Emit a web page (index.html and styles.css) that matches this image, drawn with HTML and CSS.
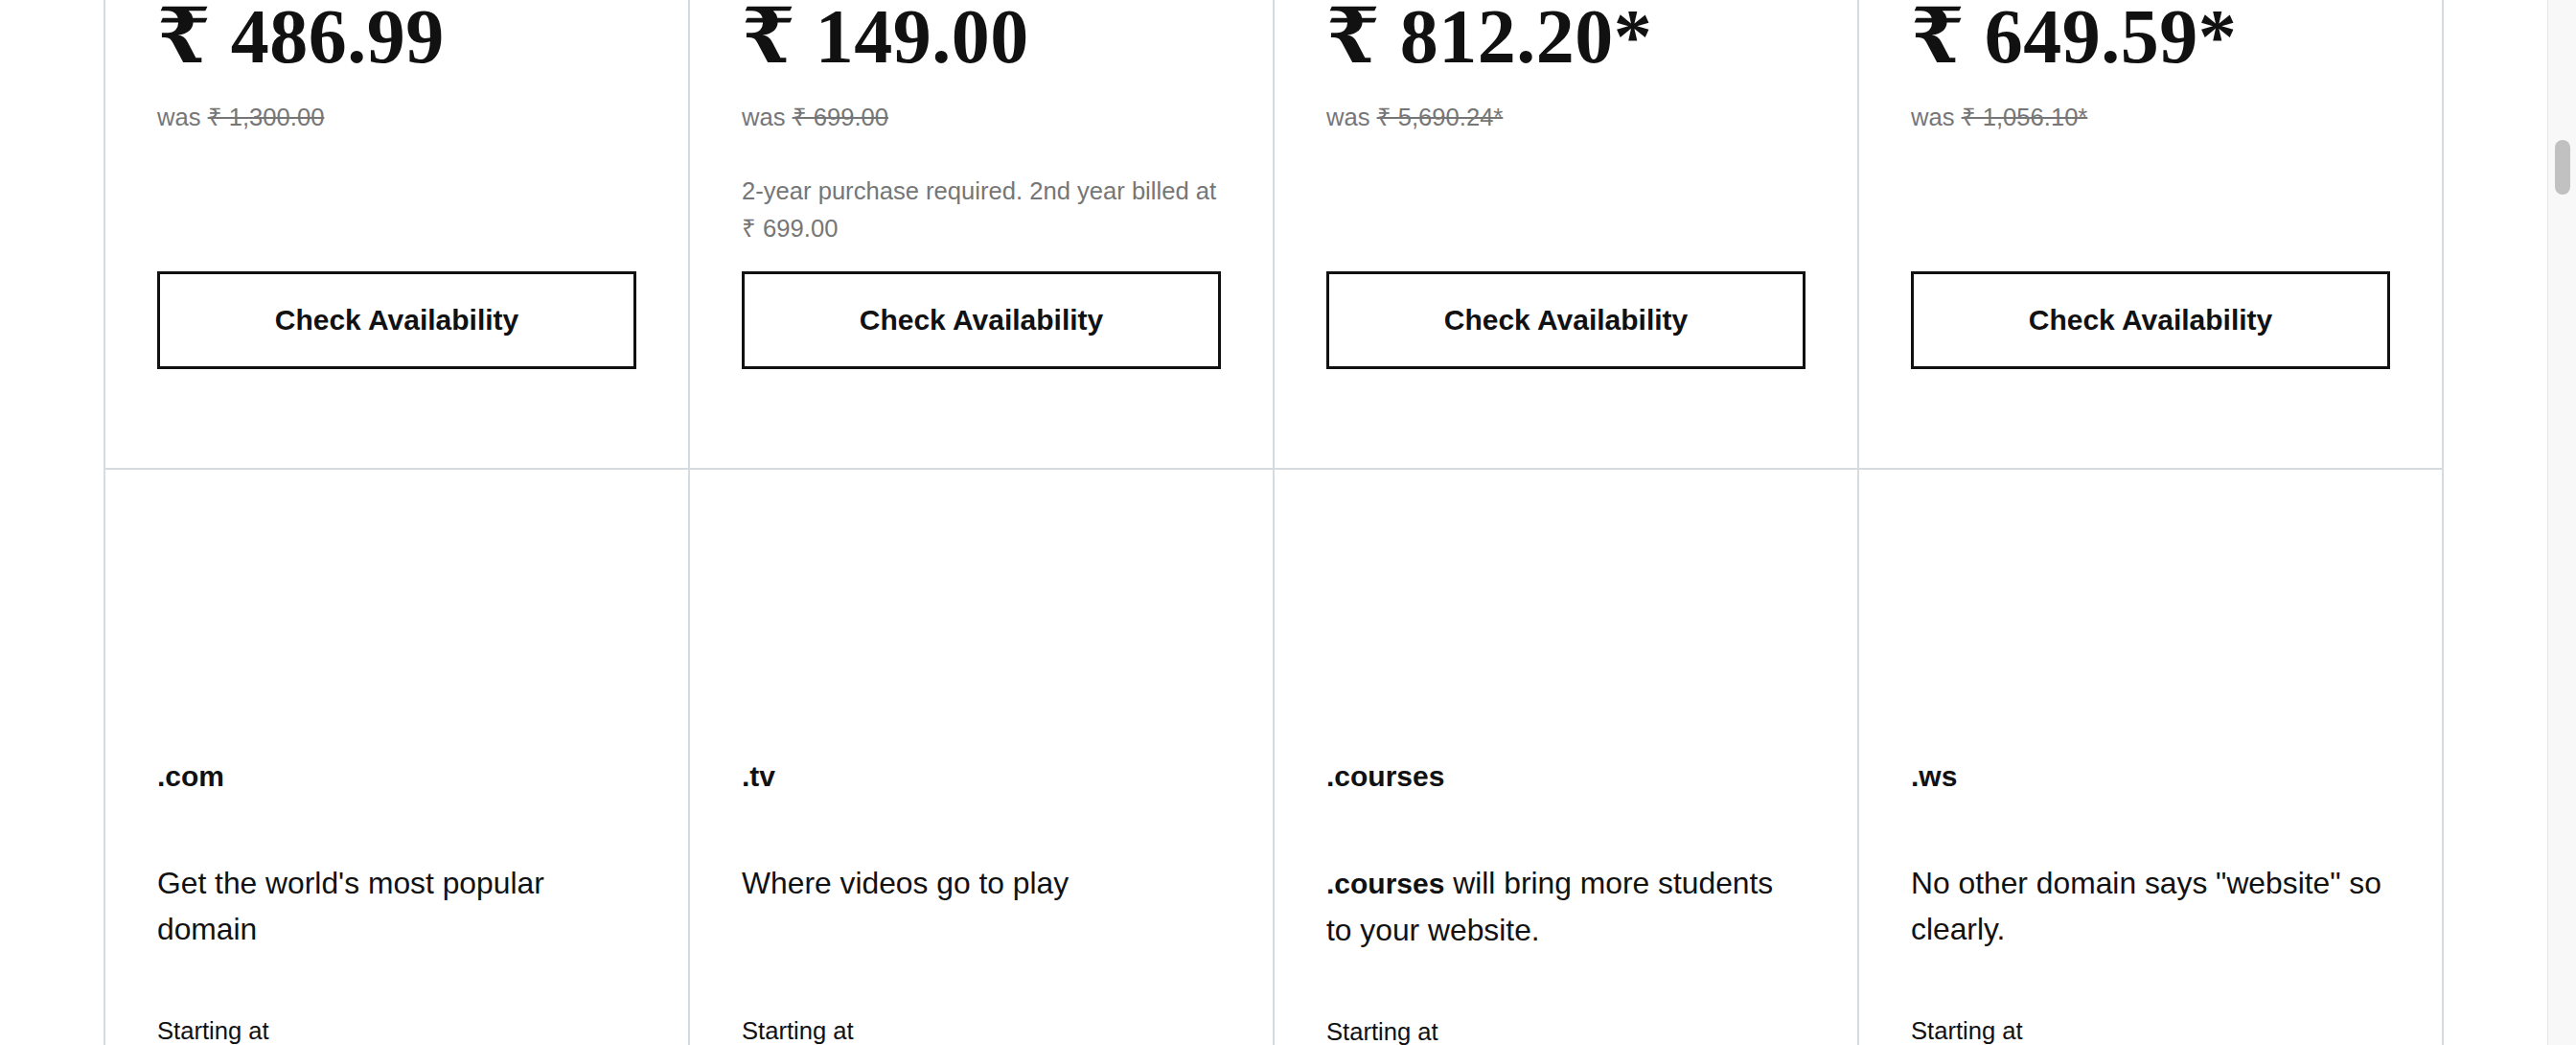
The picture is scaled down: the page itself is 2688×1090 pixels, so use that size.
FILE: index.html
```html
<!DOCTYPE html>
<html lang="en">
<head>
<meta charset="utf-8">
<title>Domain pricing</title>
<link rel="stylesheet" href="styles.css">
</head>
<body>
<div class="page">
  <main class="viewport">
    <section class="grid">
      <div class="cell cell-top">
        <div class="price">₹ 486.99</div>
        <p class="was">was <s>₹ 1,300.00</s></p>
        <div class="actions"><a class="btn" href="#">Check Availability</a></div>
      </div>
      <div class="cell cell-top">
        <div class="price">₹ 149.00</div>
        <p class="was">was <s>₹ 699.00</s></p>
        <p class="note">2-year purchase required. 2nd year billed at ₹ 699.00</p>
        <div class="actions"><a class="btn" href="#">Check Availability</a></div>
      </div>
      <div class="cell cell-top">
        <div class="price">₹ 812.20*</div>
        <p class="was">was <s>₹ 5,690.24*</s></p>
        <div class="actions"><a class="btn" href="#">Check Availability</a></div>
      </div>
      <div class="cell cell-top">
        <div class="price">₹ 649.59*</div>
        <p class="was">was <s>₹ 1,056.10*</s></p>
        <div class="actions"><a class="btn" href="#">Check Availability</a></div>
      </div>

      <div class="cell cell-bottom">
        <h3 class="tld">.com</h3>
        <p class="desc">Get the world's most popular domain</p>
        <p class="start">Starting at</p>
      </div>
      <div class="cell cell-bottom">
        <h3 class="tld">.tv</h3>
        <p class="desc">Where videos go to play</p>
        <p class="start">Starting at</p>
      </div>
      <div class="cell cell-bottom">
        <h3 class="tld">.courses</h3>
        <p class="desc"><b>.courses</b> will bring more students to your website.</p>
        <p class="start">Starting at</p>
      </div>
      <div class="cell cell-bottom">
        <h3 class="tld">.ws</h3>
        <p class="desc">No other domain says "website" so clearly.</p>
        <p class="start">Starting at</p>
      </div>
    </section>
  </main>
  <aside class="scrollbar"><div class="thumb"></div></aside>
</div>
</body>
</html>
```

FILE: styles.css
```css
* { box-sizing: border-box; }

html, body {
  margin: 0;
  padding: 0;
  background: #ffffff;
}

body {
  font-family: "Liberation Sans", Arial, sans-serif;
  color: #111111;
}

.page {
  display: flex;
  width: 2688px;
  height: 1090px;
  overflow: hidden;
}

.viewport {
  flex: 1;
  height: 1090px;
  overflow: hidden;
  background: #ffffff;
}

.grid {
  display: grid;
  grid-template-columns: repeat(4, 610px);
  margin-left: 108px;
  width: 2442px;
  border-right: 2px solid #d6dbe0;
}

.cell {
  border-left: 2px solid #d6dbe0;
  padding: 0 54px;
  display: flex;
  flex-direction: column;
}

.cell-top {
  padding-bottom: 103px;
}

.cell-bottom {
  border-top: 2px solid #d6dbe0;
  padding-top: 296px;
}

.price {
  font-family: "Liberation Serif", "DejaVu Serif", serif;
  font-weight: 700;
  font-size: 80px;
  line-height: 76px;
  letter-spacing: 0.5px;
  color: #111111;
  white-space: nowrap;
}

.was {
  margin: 27px 0 0;
  font-size: 25.6px;
  line-height: 38.4px;
  color: #767676;
}

.was s {
  text-decoration-thickness: 2px;
}

.note {
  margin: 39px 0 0;
  font-size: 25.6px;
  line-height: 38.4px;
  color: #767676;
}

.actions {
  margin-top: auto;
  padding-top: 26px;
}

.btn {
  display: flex;
  align-items: center;
  justify-content: center;
  height: 102px;
  width: 100%;
  border: 3px solid #111111;
  color: #111111;
  text-decoration: none;
  font-weight: 700;
  font-size: 30px;
  background: #ffffff;
}

.tld {
  margin: 0;
  font-size: 30px;
  font-weight: 700;
  line-height: 48px;
}

.desc {
  margin: 63px 0 0;
  font-size: 31.8px;
  line-height: 48px;
  max-width: 494px;
  min-height: 96px;
}

.desc b {
  font-size: 30px;
}

.start {
  margin: 63px 0 0;
  font-size: 25.6px;
  line-height: 38.4px;
}

.scrollbar {
  width: 30px;
  flex: none;
  height: 1090px;
  background: #f8f8f8;
  border-left: 1px solid #e6e6e6;
  padding-top: 146px;
  padding-left: 7px;
}

.thumb {
  width: 16px;
  height: 57px;
  border-radius: 8px;
  background: #c1c1c1;
}
```
